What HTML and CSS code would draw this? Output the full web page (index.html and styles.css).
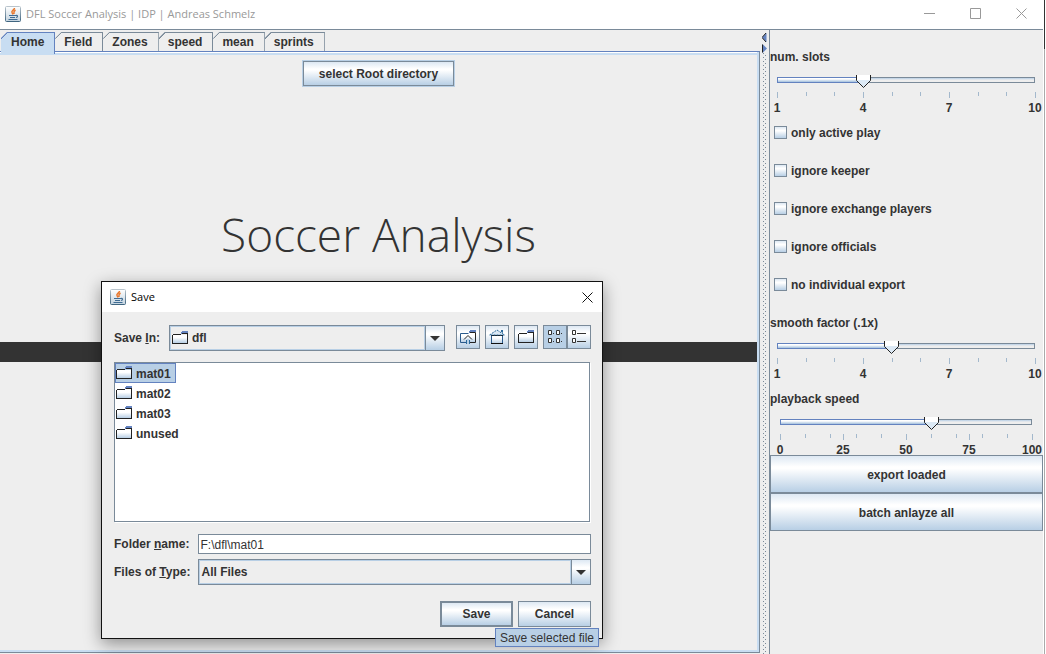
FILE: index.html
```html
<!DOCTYPE html>
<html lang="en">
<head>
<meta charset="utf-8">
<title>DFL Soccer Analysis</title>
<link rel="stylesheet" href="styles.css">
</head>
<body>
<svg class="defs" aria-hidden="true">
  <defs>
    <linearGradient id="metal" x1="0" y1="0" x2="0" y2="1"><stop offset="0" stop-color="#fff"/><stop offset="0.3" stop-color="#fff"/><stop offset="1" stop-color="#b8cfe5"/></linearGradient>
    <linearGradient id="steel" x1="0" y1="0" x2="0" y2="1"><stop offset="0" stop-color="#b9c4cc"/><stop offset="1" stop-color="#3f6580"/></linearGradient>
    <linearGradient id="plate" x1="0" y1="0" x2="0" y2="1"><stop offset="0" stop-color="#fff"/><stop offset="1" stop-color="#c3d3df"/></linearGradient>
    <symbol id="java" viewBox="0 0 16 16">
      <rect x="0.5" y="0.5" width="15" height="15" rx="1" fill="url(#plate)" stroke="url(#steel)"/>
      <path d="M9.500 2C9.500 4 6 4.500 7 6.500l1 2M10.500 4C8 5.500 9 6.500 9 8" fill="none" stroke="#e8762c" stroke-width="1.500"/>
      <path d="M4 9.500h7M5 11.500h5M11 9.500c2-.5 2 1.500 0 2M3.500 13.500h9" fill="none" stroke="#3f6c94" stroke-width="1.200"/>
    </symbol>
    <symbol id="folder" viewBox="0 0 16 16">
      <path d="M1 5h14v8H1z" fill="url(#metal)"/>
      <path d="M0 13.500h15.500V4M.5 13V5M1 4.500h8M10 3.500h6" fill="none" stroke="#222" shape-rendering="crispEdges"/>
      <path d="M10 1h6v2h-6v1H9V2h1z" fill="#6382bf"/>
    </symbol>
    <symbol id="arrow" viewBox="0 0 10 5"><path d="M0 0h10L5 5z" fill="#333"/></symbol>
  </defs>
</svg>

<header class="titlebar">
  <svg class="java" aria-hidden="true"><use href="#java"/></svg>
  <h1 class="caption">DFL Soccer Analysis | IDP | Andreas Schmelz</h1>
  <div class="controls">
    <button class="control" aria-label="Minimize"><svg viewBox="0 0 11 11"><path d="M0 5.500h11"/></svg></button>
    <button class="control" aria-label="Maximize"><svg viewBox="0 0 11 11"><path d="M.5.5h10v10H.5z"/></svg></button>
    <button class="control" aria-label="Close"><svg viewBox="0 0 11 11"><path d="M.5.5l10 10M10.500.5l-10 10"/></svg></button>
  </div>
</header>

<div class="split">
  <main class="tabbed">
    <nav class="tabs" role="tablist">
      <button class="tab selected" role="tab" aria-selected="true">Home</button>
      <button class="tab" role="tab">Field</button>
      <button class="tab" role="tab">Zones</button>
      <button class="tab" role="tab">speed</button>
      <button class="tab" role="tab">mean</button>
      <button class="tab" role="tab">sprints</button>
    </nav>
    <section class="pane">
      <button class="button focused root">select Root directory</button>
      <h2 class="headline">Soccer Analysis</h2>
      <div class="bar"></div>
    </section>
  </main>

  <div class="divider" role="separator">
    <svg class="collapse" viewBox="0 0 5 20" aria-hidden="true">
      <path d="M4.500 0v9L0 4.500z" fill="#6382bf"/><path d="M4 0L0 4.500 4 9" stroke="#222"/>
      <path d="M.5 11v9L5 15.500z" fill="#6382bf"/><path d="M.5 11.500v8" stroke="#222"/>
    </svg>
    <div class="grip"></div>
  </div>

  <aside class="sidebar">
    <label class="label" for="slots">num. slots</label>
    <div class="slider">
      <div class="rail"><div class="fill" style="width:33.3%"></div></div>
      <input class="range" id="slots" type="range" min="1" max="10" value="4">
      <svg class="ticks" aria-hidden="true"><rect height="6" x="0"/><rect height="4" x="11.1%"/><rect height="4" x="22.2%"/><rect height="6" x="33.3%"/><rect height="4" x="44.4%"/><rect height="4" x="55.6%"/><rect height="6" x="66.7%"/><rect height="4" x="77.8%"/><rect height="4" x="88.9%"/><rect height="6" x="100%"/></svg>
      <div class="scale"><span>1</span><span>4</span><span>7</span><span>10</span></div>
    </div>
    <label class="check"><input type="checkbox">only active play</label>
    <label class="check"><input type="checkbox">ignore keeper</label>
    <label class="check"><input type="checkbox">ignore exchange players</label>
    <label class="check"><input type="checkbox">ignore officials</label>
    <label class="check"><input type="checkbox">no individual export</label>
    <label class="label" for="smooth">smooth factor (.1x)</label>
    <div class="slider">
      <div class="rail"><div class="fill" style="width:44.4%"></div></div>
      <input class="range" id="smooth" type="range" min="1" max="10" value="5">
      <svg class="ticks" aria-hidden="true"><rect height="6" x="0"/><rect height="4" x="11.1%"/><rect height="4" x="22.2%"/><rect height="6" x="33.3%"/><rect height="4" x="44.4%"/><rect height="4" x="55.6%"/><rect height="6" x="66.7%"/><rect height="4" x="77.8%"/><rect height="4" x="88.9%"/><rect height="6" x="100%"/></svg>
      <div class="scale"><span>1</span><span>4</span><span>7</span><span>10</span></div>
    </div>
    <label class="label" for="speed">playback speed</label>
    <div class="slider wide-labels">
      <div class="rail"><div class="fill" style="width:60%"></div></div>
      <input class="range" id="speed" type="range" min="0" max="100" value="60">
      <svg class="ticks" aria-hidden="true"><rect height="6" x="0"/><rect height="4" x="10%"/><rect height="4" x="20%"/><rect height="6" x="25%"/><rect height="4" x="30%"/><rect height="4" x="40%"/><rect height="6" x="50%"/><rect height="4" x="60%"/><rect height="4" x="70%"/><rect height="6" x="75%"/><rect height="4" x="80%"/><rect height="4" x="90%"/><rect height="6" x="100%"/></svg>
      <div class="scale"><span>0</span><span>25</span><span>50</span><span>75</span><span>100</span></div>
    </div>
    <button class="button">export loaded</button>
    <button class="button">batch anlayze all</button>
  </aside>
</div>

<div class="dialog" role="dialog" aria-labelledby="dialog-title">
  <header class="dialog-bar">
    <svg class="java" aria-hidden="true"><use href="#java"/></svg>
    <h2 class="caption" id="dialog-title">Save</h2>
    <button class="close" aria-label="Close"><svg viewBox="0 0 11 11"><path d="M.5.5l10 10M10.500.5l-10 10"/></svg></button>
  </header>
  <form class="dialog-body">
    <div class="toolbar">
      <label for="save-in">Save <u>I</u>n:</label>
      <div class="combo">
        <svg class="folder" aria-hidden="true"><use href="#folder"/></svg>
        <select id="save-in"><option>dfl</option></select>
        <span class="drop"><svg><use href="#arrow"/></svg></span>
      </div>
      <div class="tools">
        <button type="button" class="tool" aria-label="Up one level"><svg viewBox="0 0 16 16"><path d="M1 5h14v8H1z" fill="url(#metal)"/><path d="M6 13.500H.5v-9h8" stroke="#2a5a8c"/><path d="M10 3.500h5.500v10H10" stroke="#222"/><path d="M10 1h6v2h-6v1H9V2h1z" fill="#6382bf"/><path d="M6.500 15v-4M9.500 15v-4" stroke="#2a6a9c"/><path d="M7 10h2v5H7z" fill="#b8cfe5"/><path d="M4 10.500l4-4 4 4" stroke="#222"/></svg></button>
        <button type="button" class="tool" aria-label="Home"><svg viewBox="0 0 16 16"><path d="M2.500 6.500h11v8h-11z" fill="url(#metal)" stroke="#2a5a8c"/><path d="M2 14.500h12M2 6.500h12" stroke="#111"/><path d="M.5 6L8 1l7.500 5z" fill="#dce9f5" stroke="#2a6a9c" stroke-dasharray="2 1"/><path d="M12 1h2v3l-2-1z" fill="#2a6a9c"/></svg></button>
        <button type="button" class="tool" aria-label="Create new folder"><svg><use href="#folder"/></svg></button>
        <div class="views">
          <button type="button" class="tool pressed" aria-label="List"><svg viewBox="0 0 16 16"><path d="M1.500 1.500h3v4h-3zM9.500 1.500h3v4h-3zM1.500 9.500h3v4h-3zM9.500 9.500h3v4h-3z" fill="#fff" stroke="#333"/><path d="M6 4.500h1M14 4.500h1M6 12.500h1M14 12.500h1" stroke="#333"/></svg></button>
          <button type="button" class="tool second" aria-label="Details"><svg viewBox="0 0 16 16"><path d="M1.500 1.500h3v4h-3zM1.500 9.500h3v4h-3z" fill="#fff" stroke="#333"/><path d="M6 4.500h9M6 12.500h9" stroke="#333"/></svg></button>
        </div>
      </div>
    </div>
    <ul class="files" role="listbox">
      <li class="file chosen" role="option" aria-selected="true"><svg class="folder"><use href="#folder"/></svg>mat01</li>
      <li class="file" role="option"><svg class="folder"><use href="#folder"/></svg>mat02</li>
      <li class="file" role="option"><svg class="folder"><use href="#folder"/></svg>mat03</li>
      <li class="file" role="option"><svg class="folder"><use href="#folder"/></svg>unused</li>
    </ul>
    <div class="fields">
      <label for="folder-name">Folder <u>n</u>ame:</label>
      <input class="text" id="folder-name" type="text" value="F:\dfl\mat01">
      <label for="file-type">Files of <u>T</u>ype:</label>
      <div class="combo">
        <select id="file-type"><option>All Files</option></select>
        <span class="drop"><svg><use href="#arrow"/></svg></span>
      </div>
    </div>
    <div class="actions">
      <button type="button" class="button default">Save</button>
      <button type="button" class="button">Cancel</button>
    </div>
  </form>
  <div class="tooltip" role="tooltip">Save selected file</div>
</div>
</body>
</html>
```
FILE: styles.css
```css
:root {
  --line: #7a8a99;
  --blue: #6382bf;
  --pale: #b8cfe5;
  --tab: #c8ddf2;
  --face: #eeeeee;
  --sheen: linear-gradient(#dde8f3, #ffffff 30%, #ffffff 35%, #b8cfe5);
}

* { box-sizing: border-box; }

body {
  margin: 0;
  height: 100vh;
  display: flex;
  flex-direction: column;
  padding-right: 2px;
  background: linear-gradient(#333 49px, #aaa 49px) right 1px top / 1px 100% no-repeat #fff;
  color: #333;
  font: bold 12px/14px "Liberation Sans", Arial, sans-serif;
  overflow: hidden;
}

button, input, select { font: inherit; color: inherit; margin: 0; border-radius: 0; }
svg { display: block; flex: none; fill: none; }
.defs { position: absolute; width: 0; height: 0; }
.java, .folder { width: 16px; height: 16px; }

.titlebar {
  height: 29px;
  flex: none;
  display: flex;
  align-items: center;
  gap: 5px;
  padding: 0 0 2px 5px;
  background: #fff;
}
.caption {
  flex: 1;
  margin: 0;
  color: #999;
  font: 11px/16px "Open Sans", "Noto Sans", sans-serif;
}
.controls { display: flex; }
.control { width: 46px; height: 27px; padding: 0; border: 0; background: none; display: grid; place-items: center; }
.control svg { width: 11px; height: 11px; stroke: #999; }

.split { flex: 1; min-height: 0; display: flex; padding-right: 1px; }
.tabbed {
  flex: 1;
  min-width: 0;
  display: flex;
  flex-direction: column;
  border-top: 1px solid var(--line);
  padding: 2px 0 1px;
  background: var(--face);
}

.tabs { display: flex; height: 19px; flex: none; padding-left: 1px; }
.tab {
  padding: 0 10px 0 9px;
  border: 1px solid var(--line);
  border-width: 1px 1px 0 0;
  background: linear-gradient(135deg, var(--line) 5px, transparent 5px) border-box;
  clip-path: polygon(6px 0, 100% 0, 100% 100%, 0 100%, 0 6px);
}
.tab.selected {
  z-index: 1;
  margin-bottom: -3px;
  padding: 0 10px 3px;
  border-color: var(--blue);
  background: linear-gradient(135deg, var(--blue) 5px, var(--tab) 5px) border-box;
}
.pane {
  flex: 1;
  display: flex;
  flex-direction: column;
  align-items: center;
  border: solid var(--line);
  border-width: 1px 1px 1px 0;
  border-top-color: var(--blue);
  box-shadow: inset -2px -2px var(--tab), inset 0 1px #fff, inset 0 3px var(--tab);
  padding: 9px 2px 0 0;
}
.headline {
  margin: 110px 0 0;
  font: 300 46px/76px "Open Sans", "Noto Sans", sans-serif;
}
.bar { align-self: stretch; height: 20px; margin-top: 70px; background: #333; }

.button { padding: 0 15px; border: 1px solid var(--line); background: var(--sheen); }
.button.root { height: 25px; flex: none; }
.button.focused { box-shadow: 0 0 0 1px var(--pale); }
.button.default { border-width: 2px; }

.divider {
  width: 9px;
  display: flex;
  flex-direction: column;
  border-top: 1px solid var(--line);
  padding: 3px 1px 0 2px;
  background: var(--face);
}
.collapse { width: 5px; height: 20px; }
.grip {
  flex: 1;
  background:
    linear-gradient(var(--line) 1px, transparent 1px) 1px 0 / 1px 4px repeat-y,
    linear-gradient(var(--line) 1px, transparent 1px) 3px 2px / 1px 4px repeat-y;
}

.sidebar {
  width: 274px;
  border: solid var(--line);
  border-width: 1px 0 0 1px;
  padding-top: 7px;
  display: grid;
  grid-auto-rows: 38px;
  align-content: start;
  background: var(--face);
}
.sidebar .button { padding-top: 2px; }
.label { align-self: center; padding-top: 2px; }
.check { display: flex; align-items: center; gap: 4px; padding: 2px 4px 0; }
.check input { appearance: none; width: 13px; height: 13px; margin-bottom: 2px; border: 1px solid var(--line); background: var(--sheen); }

.slider {
  display: grid;
  grid-template-rows: 14px 6px 14px;
  row-gap: 3px;
  padding: 0 8px 0 7px;
}
.slider.wide-labels { padding: 0 11px 0 10px; }
.rail { grid-area: 1 / 1; height: 6px; margin-top: 2px; border: 1px solid var(--line); background: linear-gradient(#b8cfe5, #eee 2px); }
.fill { height: 6px; margin: -1px; border: 1px solid var(--blue); background: linear-gradient(#fff, #fff 1px, #a3c0dd); }
.range { grid-area: 1 / 1; appearance: none; height: 14px; margin: 0 -7px; background: none; }
.range::-webkit-slider-thumb {
  appearance: none;
  width: 15px;
  height: 14px;
  background: url("data:image/svg+xml,%3Csvg xmlns='http://www.w3.org/2000/svg' width='15' height='14'%3E%3Cpath d='M.5 0v5.500l7 7 7-7V0' fill='%23dce9f5' stroke='%23222'/%3E%3Cpath d='M1 0h13v5H1z' fill='white'/%3E%3C/svg%3E");
}
.ticks { width: 100%; height: 6px; overflow: visible; }
.ticks rect { width: 1px; fill: #a3b8cc; shape-rendering: crispEdges; }
.scale { display: flex; justify-content: space-between; }
.scale span { width: 0; display: flex; justify-content: center; }

.dialog {
  position: absolute;
  left: 101px;
  top: 281px;
  width: 502px;
  border: 1px solid #111;
  background: var(--face);
  box-shadow: 0 5px 16px rgba(0, 0, 0, 0.4);
}
.dialog-bar { height: 30px; display: flex; align-items: center; gap: 5px; padding-left: 8px; background: #fff; }
.dialog-bar .caption { color: #000; }
.close { width: 30px; height: 30px; padding: 0; border: 0; background: none; display: grid; place-items: center; }
.close svg { width: 11px; height: 11px; stroke: #111; }
.dialog-body { padding: 13px 11px 11px 12px; }

.toolbar { display: flex; gap: 9px; }
.toolbar label { padding-top: 6px; }
.toolbar .combo { flex: 1; }
.combo { height: 26px; display: flex; align-items: center; border: 1px solid var(--line); padding-left: 2px; box-shadow: inset 1px 1px var(--pale), inset 0 -1px var(--pale); }
.combo select { flex: 1; appearance: none; border: 0; background: none; padding: 0 0 0 4px; }
.fields .combo select { padding: 0; }
.drop { width: 19px; height: 24px; display: grid; place-items: center; border-left: 1px solid var(--line); background: var(--sheen); box-shadow: -1px 0 var(--pale); }
.drop svg { width: 10px; height: 5px; }
.tools { display: flex; gap: 5px; margin-left: 2px; }
.tool { width: 24px; height: 24px; padding: 0; border: 1px solid var(--line); background: var(--sheen); display: grid; place-items: center; }
.tool svg { width: 16px; height: 16px; }
.tool.pressed { background: var(--pale); }
.views { display: flex; }

.files { list-style: none; height: 160px; margin: 11px 1px 12px 0; padding: 0; border: 1px solid var(--line); background: #fff; box-shadow: 1px 1px #fff; }
.file { width: max-content; height: 20px; display: flex; align-items: center; gap: 4px; padding: 2px 4px 0 0; border: 1px solid transparent; }
.file .folder { margin-bottom: 2px; }
.file.chosen { border-color: var(--blue); background: var(--pale); }

.fields { display: grid; grid-template-columns: max-content 1fr; gap: 5px 8px; align-items: center; }
.text { height: 20px; width: 100%; border: 1px solid var(--line); padding: 2px 1px 0; background: #fff; font-weight: normal; }

.actions { display: flex; justify-content: flex-end; gap: 5px; margin-top: 16px; }
.actions .button { width: 73px; height: 26px; padding: 0; }

.tooltip {
  position: absolute;
  right: 3px;
  bottom: -9px;
  padding: 2px 4px 1px;
  border: 1px solid var(--blue);
  background: var(--pale);
  font-weight: normal;
}
```
